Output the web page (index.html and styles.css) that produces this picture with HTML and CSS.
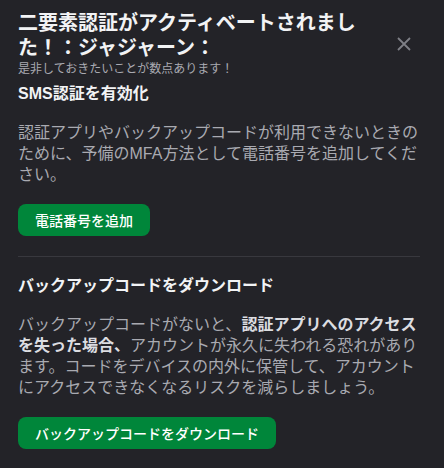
FILE: index.html
```html
<!DOCTYPE html>
<html lang="ja">
<head>
    <meta charset="UTF-8">
    <meta name="viewport" content="width=device-width, initial-scale=1.0">
    <title>二要素認証</title>
    <link rel="stylesheet" href="styles.css">
</head>
<body>
    <div class="modal">
        <div class="header">
            <div class="header-text">
                <h1 class="title">二要素認証がアクティベートされました！：ジャジャーン：</h1>
                <div class="subtitle">是非しておきたいことが数点あります！</div>
            </div>
            <button type="button" class="close" aria-label="閉じる">
                <svg width="14" height="14" viewBox="0 0 14 14">
                    <path d="M1 1L13 13M13 1L1 13" stroke="currentColor" stroke-width="1.8" fill="none"/>
                </svg>
            </button>
        </div>

        <div class="section">
            <h2 class="section-title">SMS認証を有効化</h2>
            <p class="section-text">認証アプリやバックアップコードが利用できないときのために、予備のMFA方法として電話番号を追加してください。</p>
            <button type="button" class="btn">電話番号を追加</button>
        </div>

        <div class="divider"></div>

        <div class="section">
            <h2 class="section-title">バックアップコードをダウンロード</h2>
            <p class="section-text">バックアップコードがないと、<strong>認証アプリへのアクセスを失った場合、</strong>アカウントが永久に失われる恐れがあります。コードをデバイスの内外に保管して、アカウントにアクセスできなくなるリスクを減らしましょう。</p>
            <button type="button" class="btn">バックアップコードをダウンロード</button>
        </div>
    </div>
</body>
</html>
```

FILE: styles.css
```css
body {
    margin: 0;
    background-color: #232328;
    font-family: "Liberation Sans", "Noto Sans CJK JP", sans-serif;
    color: #f2f3f5;
}
.modal {
    padding: 11px 24px 0 18px;
}
.header {
    display: flex;
    align-items: center;
    gap: 16px;
    padding-right: 4px;
}
.header-text {
    flex: 1;
}
.title {
    margin: 0;
    font-size: 20px;
    line-height: 25px;
    font-weight: 700;
    color: #f2f3f5;
}
.subtitle {
    font-size: 12px;
    line-height: 16px;
    color: #a9aab1;
}
.close {
    width: 24px;
    height: 24px;
    padding: 0;
    border: none;
    background: none;
    color: #7e7f86;
    display: flex;
    align-items: center;
    justify-content: center;
    cursor: pointer;
}
.section {
    padding-top: 7px;
}
.section-title {
    margin: 0;
    font-size: 16px;
    line-height: 20px;
    font-weight: 700;
    color: #f2f3f5;
}
.section-text {
    margin: 18px 0 19px;
    font-size: 16px;
    line-height: 21px;
    color: #a9aab1;
}
.section-text strong {
    color: #dcdde1;
}
.btn {
    height: 32px;
    padding: 0 17px;
    border: none;
    border-radius: 8px;
    background-color: #00863a;
    color: #ffffff;
    font-family: inherit;
    font-size: 14px;
    font-weight: 500;
    cursor: pointer;
}
.divider {
    height: 1px;
    margin: 20px 0 12px;
    background-color: #38383e;
}
```
